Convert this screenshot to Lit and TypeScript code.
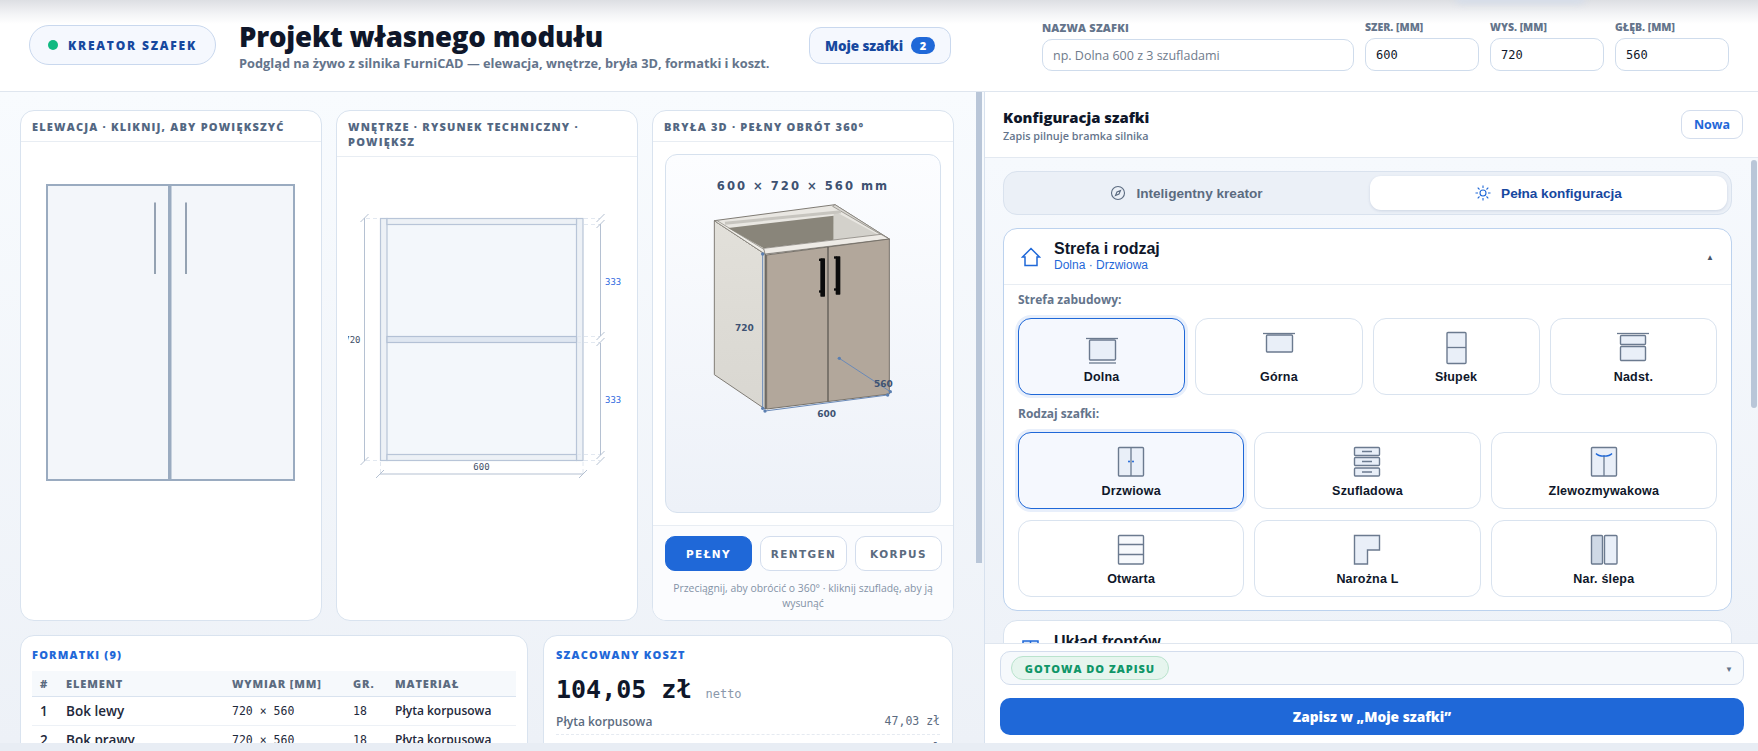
import { LitElement, html, css, svg } from "lit";
import { customElement } from "lit/decorators.js";

const zoneIcons: Record<string, any> = {
  Dolna: svg`<path class="ln" d="M0 8.5H32"/><rect class="bx" x="3.5" y="10" width="26" height="20" rx="1"/><path class="ln" d="M3 33H30"/>`,
  "Górna": svg`<path class="ln" d="M0 3.5H32"/><rect class="bx" x="3.5" y="5" width="26" height="17" rx="1"/>`,
  "Słupek": svg`<rect class="bx" x="7" y="2.5" width="19" height="31" rx="1"/><path class="ln" d="M7 17.5H26"/>`,
  "Nadst.": svg`<path class="ln" d="M0 3.5H32"/><rect class="bx" x="3.5" y="5.5" width="25" height="9" rx="1"/><rect class="bx" x="3.5" y="16.5" width="25" height="14" rx="1"/>`,
};
const typeIcons: Record<string, any> = {
  Drzwiowa: svg`<rect class="bx" x="3.5" y="3.5" width="25" height="28.5" rx="1"/><path class="ln" d="M16 3.5V32"/><circle class="dot" cx="14" cy="17.5" r="1"/><circle class="dot" cx="18" cy="17.5" r="1"/>`,
  Szufladowa: svg`<rect class="bx" x="3.5" y="3.5" width="25" height="8" rx="1"/><rect class="bx" x="3.5" y="13.5" width="25" height="8" rx="1"/><rect class="bx" x="3.5" y="24" width="25" height="8" rx="1"/><path class="ln" d="M11 7.5H21M11 17.5H21M11 28H21"/>`,
  Zlewozmywakowa: svg`<rect class="bx" x="3.5" y="3.5" width="25" height="28.5" rx="1"/><path class="ln" d="M16 11V32"/><path class="arc" d="M8 9.5C11 13 21 13 24 9.5"/>`,
  Otwarta: svg`<rect class="wh" x="3.5" y="3.5" width="25" height="28.5" rx="1"/><path class="ln" d="M3.5 12.5H28.5M3.5 22.5H28.5"/>`,
  "Narożna L": svg`<path class="bx" d="M3.5 3.5H28.5V18H16.5V32H3.5Z"/>`,
  "Nar. ślepa": svg`<rect class="dk" x="3.5" y="3.5" width="11" height="28.5" rx="1"/><rect class="bx" x="16.5" y="3.5" width="12.5" height="28.5" rx="1"/>`,
};
const parts: string[][] = [
  ["1", "Bok lewy", "720 × 560", "18", "Płyta korpusowa"],
  ["2", "Bok prawy", "720 × 560", "18", "Płyta korpusowa"],
  ["3", "Wieniec dolny", "564 × 560", "18", "Płyta korpusowa"],
  ["4", "Wieniec górny", "564 × 560", "18", "Płyta korpusowa"],
  ["5", "Półka", "562 × 540", "18", "Płyta korpusowa"],
  ["6", "Plecy", "716 × 596", "3", "HDF"],
  ["7", "Front lewy", "716 × 297", "18", "Płyta frontowa"],
  ["8", "Front prawy", "716 × 297", "18", "Płyta frontowa"],
  ["9", "Listwa", "564 × 100", "18", "Płyta korpusowa"],
];
const costs: string[][] = [
  ["Płyta korpusowa", "47,03 zł"],
  ["Fronty", "38,88 zł"],
  ["Okucia", "18,14 zł"],
];
const more: string[][] = [
  ["Układ frontów", "2 drzwi"],
  ["Wymiary", "600 × 720 × 560"],
  ["Wnętrze", "1 półka"],
  ["Materiały", "Płyta korpusowa"],
  ["Okucia", "Zawiasy"],
  ["Uchwyty", "Pionowe"],
  ["Cokół", "100 mm"],
];

@customElement("app-root")
export class AppRoot extends LitElement {
  static styles = css`
    :host { display: block; height: 751px; overflow: hidden; background: #e8edf4; font-family: "Open Sans", sans-serif; color: #0f172a; }
    * { box-sizing: border-box; }
    .app { height: 743px; display: flex; flex-direction: column; overflow: hidden; }
    header { flex: none; position: relative; overflow: hidden; height: 92px; border-bottom: 1px solid #dfe6ef; background: linear-gradient(#dddfe3, #f3f4f6 14px, #fff 24px); padding: 0 29px; display: flex; align-items: center; }
    .blob { position: absolute; left: 1455px; top: -8px; width: 130px; height: 12px; border-radius: 8px; background: #d6dde9; filter: blur(3px); }
    .pill { flex: none; width: 187px; height: 40px; margin-top: -1px; border-radius: 20px; border: 1px solid #c9d8ee; background: #f5f8fe; display: flex; align-items: center; padding-left: 18px; gap: 10px; color: #17489f; font-weight: 800; font-size: 12px; letter-spacing: 1.8px; }
    .pill i { width: 10px; height: 10px; border-radius: 50%; background: #10b981; }
    .titles { flex: none; margin-left: 23px; width: 570px; margin-top: 0; }
    h1 { margin: 0; font-size: 27.6px; line-height: 34px; font-weight: 800; letter-spacing: -0.2px; color: #0f172a; }
    .titles p { margin: 2px 0 0; font-size: 12.8px; line-height: 17px; font-weight: 700; color: #64748b; }
    .mine { flex: none; width: 142px; height: 37px; border-radius: 12px; border: 1px solid #c9d8ee; background: #f5f8fe; display: flex; align-items: center; justify-content: center; gap: 8px; color: #17489f; font-size: 13.5px; font-weight: 800; letter-spacing: -0.1px; }
    .mine b { width: 24px; height: 17px; border-radius: 9px; background: #1f68d8; color: #fff; font-size: 11px; display: flex; align-items: center; justify-content: center; }
    .fields { flex: 1; display: flex; justify-content: flex-end; gap: 11px; }
    .field { width: 114px; display: flex; flex-direction: column; gap: 4px; }
    .field.name { width: 312px; margin-top: 1px; }
    .field label { font-size: 10.5px; line-height: 14px; font-weight: 800; color: #64748b; letter-spacing: 0; }
    .field.name label { font-size: 11px; letter-spacing: 0.2px; }
    .input { height: 33px; border: 1px solid #cfdcec; border-radius: 10px; background: #fff; display: flex; align-items: center; padding: 0 10px; font-family: "DejaVu Sans Mono", monospace; font-size: 12px; font-weight: 500; color: #0f172a; }
    .field.name .input { height: 32px; font-family: "Open Sans", sans-serif; font-size: 12.5px; font-weight: 500; color: #6f7b8c; }
    main { flex: 1; min-height: 0; display: flex; position: relative; }
    .thumb { position: absolute; background: #b9c6d8; }
    .thumb.l { left: 976px; top: 0; width: 6px; height: 471px; }
    .thumb.r { left: 1751px; top: 68px; width: 6px; height: 248px; border-radius: 3px; }
    .left { width: 984px; flex: none; overflow: hidden; padding: 18px 30px 0 20px; background: linear-gradient(#f8fbfe, #edf1f7 651px); }
    .row1 { display: grid; grid-template-columns: repeat(3, 1fr); gap: 14px; height: 511px; }
    .row2 { display: grid; grid-template-columns: 508px 410px; gap: 15px; margin-top: 14px; height: 339px; }
    .card { background: #fff; border: 1px solid #d9e3ef; border-radius: 14px; overflow: hidden; display: flex; flex-direction: column; }
    .chead { flex: none; border-bottom: 1px solid #e8edf3; padding: 8px 11px 7px; font-size: 11px; line-height: 15px; font-weight: 800; letter-spacing: 1.2px; color: #536782; }
    .elev { flex: 1; padding: 42px 0 0 25px; }
    .wn { flex: 1; padding: 43px 0 0 11px; }
    svg { display: block; }
    .cv { flex: none; margin: 12px 12px 0; height: 359px; border: 1px solid #d6e1ee; border-radius: 12px; background: linear-gradient(#fcfdff, #edf1f8); padding-top: 22px; }
    .cv .t { text-align: center; font-family: "DejaVu Sans", sans-serif; font-weight: 700; font-size: 11.6px; line-height: 18px; letter-spacing: 2px; color: #3e5272; }
    .cv svg { margin-top: 4px; }
    .btm { flex: 1; margin-top: 12px; border-top: 1px solid #e8edf3; background: #fbfcfe; padding: 10px 12px 0; }
    .btns { display: grid; grid-template-columns: repeat(3, 87px); gap: 8px; }
    .bt { height: 35px; border: 1px solid #d3dded; border-radius: 10px; background: #fff; display: flex; align-items: center; justify-content: center; font-family: "DejaVu Sans", sans-serif; font-weight: 700; font-size: 10.5px; letter-spacing: 1.4px; color: #5b6b80; }
    .bt.on { background: #1f68d8; border-color: #1f68d8; color: #fff; }
    .hint { margin: 10px 0 0; text-align: center; font-size: 10.4px; line-height: 15px; font-weight: 500; color: #8392a6; }
    .box { padding: 0 11px; }
    .box h3 { margin: 11px 0 0; height: 16px; font-size: 11px; line-height: 16px; font-weight: 800; letter-spacing: 1.2px; color: #1f68d8; }
    table { width: 100%; border-collapse: collapse; margin-top: 8px; table-layout: fixed; }
    th { height: 25px; background: #f6f9fc; border-bottom: 1px solid #d9e3ef; text-align: left; font-size: 11px; font-weight: 800; letter-spacing: 0.9px; color: #5b6b80; padding: 0; }
    td { height: 29px; border-bottom: 1px solid #edf1f6; font-size: 12px; font-weight: 600; color: #1e293b; padding: 0; }
    td.e, td:first-child { font-size: 13.5px; }
    td.m { font-family: "DejaVu Sans Mono", monospace; font-weight: 400; font-size: 11.5px; }
    th:first-child, td:first-child { padding-left: 8px; }
    .box.cost { padding: 0 12px; }
    .sum { margin-top: 13px; display: flex; align-items: baseline; gap: 14px; font-family: "DejaVu Sans Mono", monospace; font-size: 25px; line-height: 28px; font-weight: 700; color: #0f172a; }
    .sum span { font-size: 12px; font-weight: 400; color: #8a98ab; }
    .cr { height: 27px; display: flex; align-items: center; justify-content: space-between; border-bottom: 1px dashed #e5eaf1; font-size: 12px; font-weight: 600; color: #5b6b80; }
    .cr span { font-family: "DejaVu Sans Mono", monospace; font-weight: 400; font-size: 11.5px; }
    .right { flex: 1; min-width: 0; border-left: 1px solid #d7e1ee; display: flex; flex-direction: column; background: #fff; }
    .rhead { flex: none; height: 66px; border-bottom: 1px solid #e3e9f1; padding: 0 15px 0 18px; display: flex; align-items: center; justify-content: space-between; }
    .rhead h2 { margin: 0; font-size: 14.8px; line-height: 20px; font-weight: 800; color: #0f172a; }
    .rhead p { margin: 2px 0 0; font-size: 10.8px; line-height: 14px; font-weight: 600; color: #64748b; }
    .nowa { width: 62px; height: 29px; border: 1px solid #d3dded; border-radius: 9px; display: flex; align-items: center; justify-content: center; font-size: 12.5px; font-weight: 700; color: #1f68d8; }
    .rbody { flex: 1; min-height: 0; overflow: hidden; padding: 13px 26px 0 18px; background: linear-gradient(#f6f9fd, #eef2f8 486px); }
    .seg { height: 44px; border: 1px solid #d9e2ee; border-radius: 14px; background: #ebf0f7; padding: 4px; display: flex; gap: 5px; }
    .tab { flex: 1; display: flex; align-items: center; justify-content: center; gap: 10px; font-family: "Liberation Sans", sans-serif; font-size: 13.6px; font-weight: 700; color: #5b6b80; border-radius: 11px; }
    .tab.on { flex: none; width: 357px; background: #fff; color: #17489f; box-shadow: 0 1px 3px rgba(30, 60, 110, 0.14); }
    .sec { margin-top: 9px; background: #fff; border: 1px solid #d9e3ef; border-radius: 14px; overflow: hidden; }
    .sec.open { margin-top: 13px; border-color: #bcd2ee; height: 383px; }
    .shead { height: 56px; display: flex; align-items: center; padding: 0 17px; gap: 13px; }
    .sec.open .shead { border-bottom: 1px solid #e8edf3; }
    .shead .tx { flex: 1; }
    .shead h4 { margin: 0; font-family: "Liberation Sans", sans-serif; font-size: 16px; line-height: 18px; font-weight: 700; color: #0f172a; }
    .shead small { display: block; font-family: "Liberation Sans", sans-serif; font-size: 12px; line-height: 15px; color: #1f68d8; }
    .car { font-size: 8px; color: #475569; }
    .sbody { padding: 6px 14px 0; }
    .sl { height: 18px; font-size: 12px; line-height: 18px; font-weight: 700; color: #64748b; }
    .zones { margin-top: 9px; display: grid; grid-template-columns: repeat(4, 1fr); gap: 10px; }
    .types { margin-top: 9px; display: grid; grid-template-columns: repeat(3, 1fr); gap: 11px 10px; }
    .sl.two { margin-top: 10px; }
    .tile { height: 77px; border: 1px solid #d9e3ef; border-radius: 13px; background: #fff; padding-top: 11px; display: flex; flex-direction: column; align-items: center; font-family: "Liberation Sans", sans-serif; font-size: 12.5px; line-height: 16px; font-weight: 700; color: #0f172a; }
    .tile.on { border-color: #1f68d8; background: #f5f8fe; box-shadow: 0 0 0 3px #e8effb; }
    .tile span { margin-top: 3px; letter-spacing: 0.2px; }
    .ln { fill: none; stroke: #6b7a8f; stroke-width: 1.3; }
    .bx { fill: #e9eff8; stroke: #6b7a8f; stroke-width: 1.4; }
    .wh { fill: #f7f9fc; stroke: #6b7a8f; stroke-width: 1.4; }
    .dk { fill: #cfd9e6; stroke: #6b7a8f; stroke-width: 1.4; }
    .dot { fill: #1f68d8; }
    .arc { fill: none; stroke: #1f68d8; stroke-width: 1.4; }
    .foot { flex: none; height: 100px; border-top: 1px solid #dfe6ef; background: #fff; padding: 7px 14px 0 15px; }
    .sel { height: 34px; border: 1px solid #d3dded; border-radius: 10px; background: #f6f9fc; display: flex; align-items: center; justify-content: space-between; padding: 0 10px; }
    .badge { height: 24px; width: 158px; border: 1px solid #b9e3cd; border-radius: 12px; background: #e6f5ee; color: #0f9668; font-size: 11px; font-weight: 800; letter-spacing: 1px; display: flex; align-items: center; justify-content: center; }
    .sel .car { color: #64748b; }
    .save { margin-top: 13px; height: 37px; border-radius: 10px; background: #1f68d8; color: #fff; font-size: 13.7px; font-weight: 800; display: flex; align-items: center; justify-content: center; }
    .dim { fill: none; stroke: #b5c1d2; stroke-width: 1; }
    .dash { fill: none; stroke: #e2e8f0; stroke-width: 1; stroke-dasharray: 4 3; }
    .p1 { fill: #edf1f6; stroke: #b8c5d8; stroke-width: 1.2; }
    .p2 { fill: #dfe7f1; stroke: #b3c1d5; stroke-width: 1.2; }
    .dt { font-family: "DejaVu Sans Mono", monospace; font-size: 9px; fill: #3f5068; }
    .dt.b { fill: #2f6ae0; }
    .d3 { font-family: "DejaVu Sans", sans-serif; font-weight: 700; font-size: 27px; fill: #3e5272; }
  `;

  private tile(name: string, icon: any, on = false) {
    return html`<div class="tile ${on ? "on" : ""}"><svg width="32" height="36" viewBox="0 0 32 36">${icon}</svg><span>${name}</span></div>`;
  }

  private elevation() {
    return html`<svg width="250" height="300" viewBox="0 0 250 300">
      <rect x="1" y="1" width="122" height="295" fill="#f3f6fa" stroke="#9aabc0" stroke-width="2"/>
      <rect x="124.500" y="1" width="123.500" height="295" fill="#f3f6fa" stroke="#9aabc0" stroke-width="2"/>
      <path d="M109 18.500V90M140 18.500V90" stroke="#76869b" stroke-width="1.500" fill="none"/>
    </svg>`;
  }

  private interior() {
    const tick = (x: number, y: number) => svg`<path class="dim" d="M${x - 4} ${y + 4}L${x + 4} ${y - 4}"/>`;
    return html`<svg width="280" height="290" viewBox="347 200 280 290">
      <rect x="379.500" y="218.500" width="202" height="242" fill="#f3f7fb"/>
      <rect class="p1" x="379.500" y="218.500" width="6.500" height="242"/>
      <rect class="p1" x="575.500" y="218.500" width="6.500" height="242"/>
      <rect class="p1" x="386" y="218.500" width="189.500" height="6"/>
      <rect class="p2" x="386" y="336.500" width="189.500" height="6"/>
      <rect class="p1" x="386" y="454.500" width="189.500" height="6"/>
      <path class="dash" d="M365 218.500H379M365 460.500H379M583 218.500H599M583 224.500H599M576 336.500H599M576 342.500H599M576 454.500H599M583 460.500H599M379.500 462V474M582 462V474"/>
      <path class="dim" d="M363.500 218V461"/>${tick(363.5, 218)}${tick(363.5, 461)}
      <path class="dim" d="M599.500 224V336M599.500 343V455"/>
      ${tick(599.5, 218)}${tick(599.5, 224)}${tick(599.5, 336)}${tick(599.5, 342)}${tick(599.5, 455)}${tick(599.5, 461)}
      <path class="dim" d="M379 474H582" stroke-width="1.200"/>${tick(379, 474)}${tick(582, 474)}
      <text class="dt" x="359.500" y="343" text-anchor="end">720</text>
      <text class="dt b" x="604" y="284.500">333</text>
      <text class="dt b" x="604" y="402.500">333</text>
      <text class="dt" x="480.500" y="470" text-anchor="middle">600</text>
    </svg>`;
  }

  private box3d() {
    return html`<svg width="276" height="220" viewBox="45 210 828 660">
      <defs><linearGradient id="sd" x1="0" y1="0" x2="0" y2="1"><stop offset="0" stop-color="#e2e0da"/><stop offset="1" stop-color="#d9d7d1"/></linearGradient></defs>
      <polygon points="190,275 342,375 342,840 190,737" fill="url(#sd)" stroke="#807c75" stroke-width="3"/>
      <polygon points="190,275 552,227 715,330 342,375" fill="#e9e7e2" stroke="#7f7b74" stroke-width="3"/>
      <polygon points="200,276 340,362 342,375 190,275" fill="#f0eee9" stroke="#7f7b74" stroke-width="2"/>
      <polygon points="552,227 715,330 692,318 545,232" fill="#d9d7d2" stroke="#7f7b74" stroke-width="2"/>
      <polygon points="232,297 548,260 548,332 338,358" fill="#89857a"/>
      <polygon points="548,245 690,322 548,334" fill="#d3d1cb"/>
      <path d="M222 283L570 248" stroke="#c7c5bf" stroke-width="9" fill="none"/>
      <polygon points="338,358 690,316 715,330 342,375" fill="#eeebe6" stroke="#77736c" stroke-width="2"/>
      <polygon points="342,375 348,378 348,840 342,840" fill="#6e6a64"/>
      <polygon points="347,378 715,330 715,795 347,840" fill="#b2a79b" stroke="#77726a" stroke-width="3"/>
      <path d="M531 354V816" stroke="#5f5b55" stroke-width="4" fill="none"/>
      <rect x="508" y="388" width="14" height="115" fill="#0c0c0c" rx="2"/><rect x="504" y="389" width="8" height="7" fill="#0c0c0c"/><rect x="504" y="484" width="8" height="7" fill="#0c0c0c"/>
      <rect x="554" y="382" width="14" height="115" fill="#0c0c0c" rx="2"/><rect x="549" y="382" width="8" height="7" fill="#0c0c0c"/><rect x="549" y="478" width="8" height="7" fill="#0c0c0c"/>
      <path d="M335 375V838M342 846L710 798M565 688L718 788" stroke="#6a8ab8" stroke-width="3" fill="none"/>
      <g fill="#5b7fb0"><circle cx="335" cy="375" r="5"/><circle cx="335" cy="838" r="5"/><circle cx="342" cy="846" r="5"/><circle cx="710" cy="798" r="5"/><circle cx="565" cy="688" r="5"/><circle cx="718" cy="788" r="5"/></g>
      <text class="d3" x="280" y="606" text-anchor="middle">720</text>
      <text class="d3" x="527" y="863" text-anchor="middle">600</text>
      <text class="d3" x="697" y="774" text-anchor="middle">560</text>
    </svg>`;
  }

  render() {
    return html`<div class="app">
      <header>
        <div class="blob"></div>
        <div class="pill"><i></i>KREATOR SZAFEK</div>
        <div class="titles">
          <h1>Projekt własnego modułu</h1>
          <p>Podgląd na żywo z silnika FurniCAD — elewacja, wnętrze, bryła 3D, formatki i koszt.</p>
        </div>
        <div class="mine">Moje szafki <b>2</b></div>
        <div class="fields">
          <div class="field name"><label>NAZWA SZAFKI</label><div class="input">np. Dolna 600 z 3 szufladami</div></div>
          <div class="field"><label>SZER. [MM]</label><div class="input">600</div></div>
          <div class="field"><label>WYS. [MM]</label><div class="input">720</div></div>
          <div class="field"><label>GŁĘB. [MM]</label><div class="input">560</div></div>
        </div>
      </header>
      <main>
        <section class="left">
          <div class="row1">
            <div class="card"><div class="chead">ELEWACJA · KLIKNIJ, ABY POWIĘKSZYĆ</div><div class="elev">${this.elevation()}</div></div>
            <div class="card"><div class="chead">WNĘTRZE · RYSUNEK TECHNICZNY · POWIĘKSZ</div><div class="wn">${this.interior()}</div></div>
            <div class="card"><div class="chead">BRYŁA 3D · PEŁNY OBRÓT 360°</div>
              <div class="cv"><div class="t">600 × 720 × 560 mm</div>${this.box3d()}</div>
              <div class="btm">
                <div class="btns"><div class="bt on">PEŁNY</div><div class="bt">RENTGEN</div><div class="bt">KORPUS</div></div>
                <p class="hint">Przeciągnij, aby obrócić o 360° · kliknij szufladę, aby ją wysunąć</p>
              </div>
            </div>
          </div>
          <div class="row2">
            <div class="card"><div class="box">
              <h3>FORMATKI (9)</h3>
              <table>
                <colgroup><col style="width:34px"/><col style="width:166px"/><col style="width:121px"/><col style="width:42px"/><col/></colgroup>
                <thead><tr><th>#</th><th>ELEMENT</th><th>WYMIAR [MM]</th><th>GR.</th><th>MATERIAŁ</th></tr></thead>
                <tbody>${parts.map((r) => html`<tr><td>${r[0]}</td><td class="e">${r[1]}</td><td class="m">${r[2]}</td><td class="m">${r[3]}</td><td>${r[4]}</td></tr>`)}</tbody>
              </table>
            </div></div>
            <div class="card"><div class="box cost">
              <h3>SZACOWANY KOSZT</h3>
              <div class="sum">104,05 zł <span>netto</span></div>
              ${costs.map((c) => html`<div class="cr">${c[0]}<span>${c[1]}</span></div>`)}
            </div></div>
          </div>
        </section>
        <section class="right">
          <div class="rhead">
            <div><h2>Konfiguracja szafki</h2><p>Zapis pilnuje bramka silnika</p></div>
            <div class="nowa">Nowa</div>
          </div>
          <div class="rbody">
            <div class="seg">
              <div class="tab">
                <svg width="16" height="16" viewBox="0 0 16 16" fill="none" stroke="#5b6b80" stroke-width="1.100"><circle cx="8" cy="8" r="6.500"/><path d="M10.500 5.500L9 9 5.500 10.500 7 7Z"/></svg>
                Inteligentny kreator</div>
              <div class="tab on">
                <svg width="16" height="16" viewBox="0 0 16 16" fill="none" stroke="#1f68d8" stroke-width="1.100"><circle cx="8" cy="8" r="3"/><path d="M8 0.500V3M8 13V15.500M0.500 8H3M13 8H15.500M2.700 2.700L4.500 4.500M11.500 11.500L13.300 13.300M2.700 13.300L4.500 11.500M11.500 4.500L13.300 2.700"/></svg>
                Pełna konfiguracja</div>
            </div>
            <div class="sec open">
              <div class="shead">
                <svg width="20" height="20" viewBox="0 0 20 20" fill="none" stroke="#1f68d8" stroke-width="1.500"><path d="M1.500 10L10 1.500 18.500 10H16V18.500H4V10Z"/></svg>
                <div class="tx"><h4>Strefa i rodzaj</h4><small>Dolna · Drzwiowa</small></div>
                <span class="car">▲</span>
              </div>
              <div class="sbody">
                <div class="sl">Strefa zabudowy:</div>
                <div class="zones">${Object.keys(zoneIcons).map((k, i) => this.tile(k, zoneIcons[k], i === 0))}</div>
                <div class="sl two">Rodzaj szafki:</div>
                <div class="types">${Object.keys(typeIcons).map((k, i) => this.tile(k, typeIcons[k], i === 0))}</div>
              </div>
            </div>
            ${more.map((m) => html`<div class="sec"><div class="shead">
              <svg width="20" height="20" viewBox="0 0 20 20" fill="#dbe7f8" stroke="#1f68d8" stroke-width="1.500"><rect x="2" y="2" width="15" height="15"/><path d="M9.500 2V17M2 7H17"/></svg>
              <div class="tx"><h4>${m[0]}</h4><small>${m[1]}</small></div><span class="car">▼</span>
            </div></div>`)}
          </div>
          <div class="foot">
            <div class="sel"><div class="badge">GOTOWA DO ZAPISU</div><span class="car">▼</span></div>
            <div class="save">Zapisz w „Moje szafki”</div>
          </div>
        </section>
        <div class="thumb l"></div>
        <div class="thumb r"></div>
      </main>
    </div>`;
  }
}
